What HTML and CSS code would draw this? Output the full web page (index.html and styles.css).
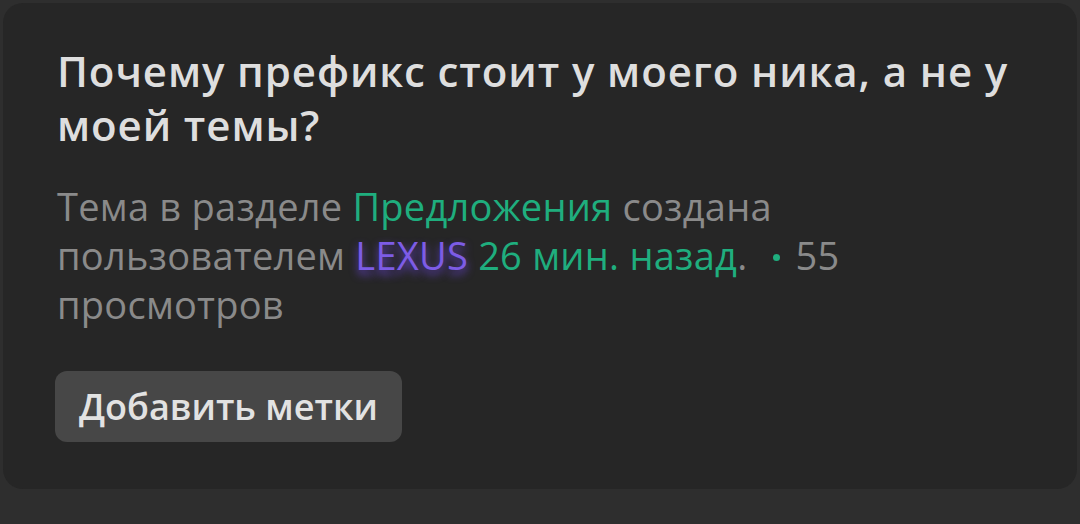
FILE: index.html
```html
<!DOCTYPE html>
<html lang="ru">
<head>
    <meta charset="UTF-8">
    <meta name="viewport" content="width=device-width, initial-scale=1.0">
    <title>Тема</title>
    <link rel="stylesheet" href="styles.css">
</head>
<body>
    <div class="thread-card">
        <h1 class="thread-title">Почему префикс стоит у моего ника, а не у моей темы?</h1>
        <p class="thread-meta">
            Тема в разделе <a class="green" href="#">Предложения</a> создана пользователем
            <a class="user" href="#">LEXUS</a> <span class="green">26 мин. назад</span>.
            <span class="dot"></span> 55 просмотров
        </p>
        <button class="tag-btn">Добавить метки</button>
    </div>
</body>
</html>
```

FILE: styles.css
```css
body {
    margin: 0;
    background: #2e2e2e;
    font-family: "Open Sans", "Noto Sans", sans-serif;
}
.thread-card {
    margin: 3px 3px 0;
    height: 486px;
    box-sizing: border-box;
    background: #262626;
    border-radius: 20px;
    padding: 41px 54px 0;
}
.thread-title {
    margin: 0;
    font-size: 42px;
    line-height: 54px;
    font-weight: 600;
    letter-spacing: 0.9px;
    color: #dedede;
}
.thread-meta {
    margin: 30px 0 0;
    font-size: 38px;
    line-height: 49px;
    letter-spacing: 0.25px;
    color: #8a8a8a;
}
.thread-meta a { text-decoration: none; }
.green { color: #1fae7e; }
.user {
    color: #7d5ce6;
    text-shadow: 0 4px 8px rgba(110, 70, 230, 0.9);
}
.dot {
    display: inline-block;
    width: 7px;
    height: 7px;
    border-radius: 50%;
    background: #1fae7e;
    vertical-align: 9px;
    margin: 0 5px 0 16px;
}
.tag-btn {
    display: block;
    margin: 42px 0 0 -2px;
    height: 71px;
    padding: 0 24px;
    border: none;
    border-radius: 12px;
    background: #474747;
    color: #e2e2e2;
    font-family: inherit;
    font-size: 36px;
    font-weight: 600;
}
```
